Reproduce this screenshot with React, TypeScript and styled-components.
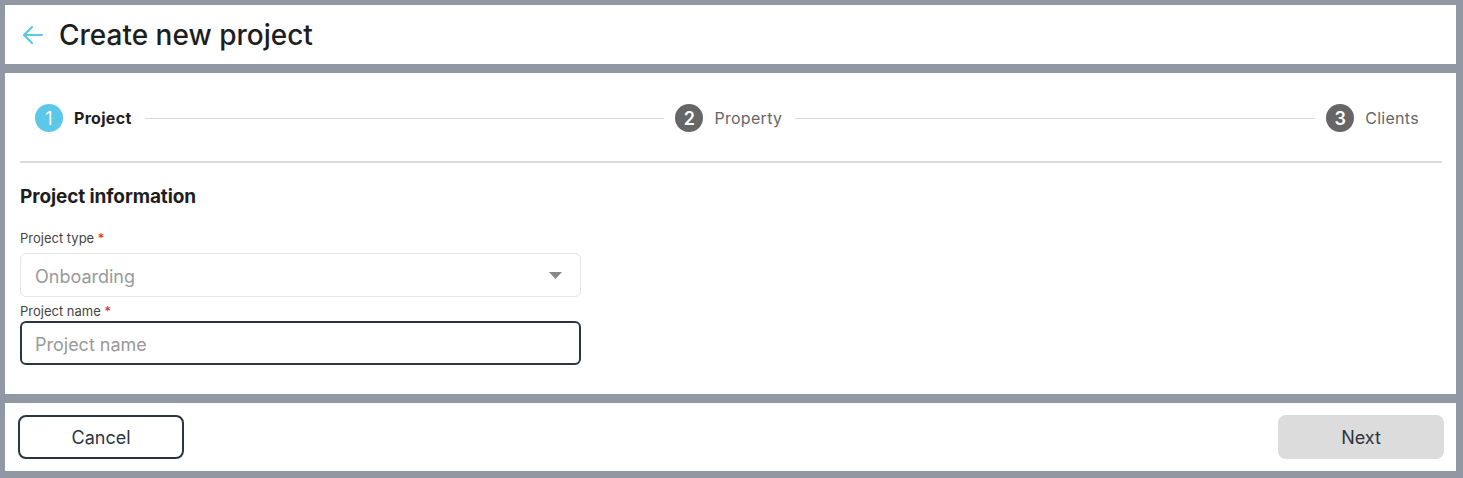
import React from "react";
import styled, { createGlobalStyle } from "styled-components";

const Global = createGlobalStyle`
  html, body { margin: 0; padding: 0; background: #9198a4; }
  body { font-family: "Inter", "Noto Sans", sans-serif; color: #1e1e1e; }
  * { box-sizing: border-box; }
`;

const Page = styled.div`
  width: 1463px;
  height: 478px;
  padding: 5px 7px 7px 5px;
  display: flex;
  flex-direction: column;
  gap: 9px;
`;

const Panel = styled.div<{ $h: number }>`
  background: #fff;
  height: ${(p) => p.$h}px;
  flex: none;
`;

const Header = styled(Panel)`
  display: flex;
  align-items: center;
  padding-left: 17px;
  gap: 15px;
`;

const Title = styled.h1`
  margin: 0;
  font-size: 28px;
  font-weight: 500;
  color: #1e1e1e;
`;

const Main = styled(Panel)`
  padding: 0 14px 0 15px;
`;

const Stepper = styled.div`
  height: 90px;
  display: flex;
  align-items: center;
  padding: 2px 23px 0 15px;
  border-bottom: 2px solid #dcdcdf;
`;

const Step = styled.div<{ $active?: boolean }>`
  display: flex;
  align-items: center;
  gap: 11px;
  font-size: 16px;
  letter-spacing: 0.3px;
  font-weight: ${(p) => (p.$active ? 700 : 400)};
  color: ${(p) => (p.$active ? "#1e1e1e" : "#666")};
  flex: none;
`;

const Circle = styled.span<{ $active?: boolean }>`
  width: 28px;
  height: 28px;
  border-radius: 50%;
  background: ${(p) => (p.$active ? "#5bc8e9" : "#666")};
  color: #fff;
  display: flex;
  align-items: center;
  justify-content: center;
  font-size: 18px;
  letter-spacing: 0;
  font-weight: ${(p) => (p.$active ? 400 : 600)};
`;

const Line = styled.div`
  flex: 1;
  height: 1px;
  background: #d8d8d8;
  margin: 0 11px 0 13px;
`;

const Section = styled.div`
  padding-top: 22px;
`;

const SectionTitle = styled.h2`
  margin: 0 0 22px;
  font-size: 19px;
  font-weight: 700;
  color: #1e1e1e;
  letter-spacing: -0.1px;
`;

const Label = styled.div<{ $gap: number }>`
  font-size: 13px;
  color: #444;
  margin-bottom: ${(p) => p.$gap}px;
  line-height: 16px;
`;

const Star = styled.span`
  color: #e02020;
`;

const Field = styled.div<{ $dark?: boolean }>`
  width: 561px;
  height: 44px;
  border-radius: 6px;
  border: ${(p) => (p.$dark ? "2px solid #2c3640" : "1px solid #e6e6e6")};
  display: flex;
  align-items: center;
  justify-content: space-between;
  padding: 3px 18px 0 ${(p) => (p.$dark ? 13 : 14)}px;
  font-size: 18px;
  color: #9a9a9a;
  margin-bottom: 6px;

  svg {
    margin-top: -3px;
  }
`;

const Footer = styled(Panel)`
  display: flex;
  align-items: center;
  justify-content: space-between;
  padding: 0 12px 0 13px;
`;

const Button = styled.button<{ $primary?: boolean }>`
  width: 166px;
  height: 44px;
  border-radius: 8px;
  font-family: inherit;
  font-size: 18px;
  padding-top: 2px;
  color: #2c3640;
  background: ${(p) => (p.$primary ? "#dcdcdc" : "#fff")};
  border: ${(p) => (p.$primary ? "none" : "2px solid #2c3640")};
`;

export default function App() {
  return (
    <>
      <Global />
      <Page>
        <Header $h={59}>
          <svg width="22" height="20" viewBox="0 0 22 20" fill="none" stroke="#5bc8e9" strokeWidth="2.2" strokeLinecap="round" strokeLinejoin="round">
            <path d="M20 10H2M10 2L2 10l8 8" />
          </svg>
          <Title>Create new project</Title>
        </Header>
        <Main $h={321}>
          <Stepper>
            <Step $active>
              <Circle $active>1</Circle>Project
            </Step>
            <Line />
            <Step>
              <Circle>2</Circle>Property
            </Step>
            <Line />
            <Step>
              <Circle>3</Circle>Clients
            </Step>
          </Stepper>
          <Section>
            <SectionTitle>Project information</SectionTitle>
            <Label $gap={7}>
              Project type <Star>*</Star>
            </Label>
            <Field>
              Onboarding
              <svg width="13" height="7" viewBox="0 0 13 7">
                <path d="M0 0h13L6.5 7z" fill="#888" />
              </svg>
            </Field>
            <Label $gap={2}>
              Project name <Star>*</Star>
            </Label>
            <Field $dark>Project name</Field>
          </Section>
        </Main>
        <Footer $h={68}>
          <Button>Cancel</Button>
          <Button $primary>Next</Button>
        </Footer>
      </Page>
    </>
  );
}
